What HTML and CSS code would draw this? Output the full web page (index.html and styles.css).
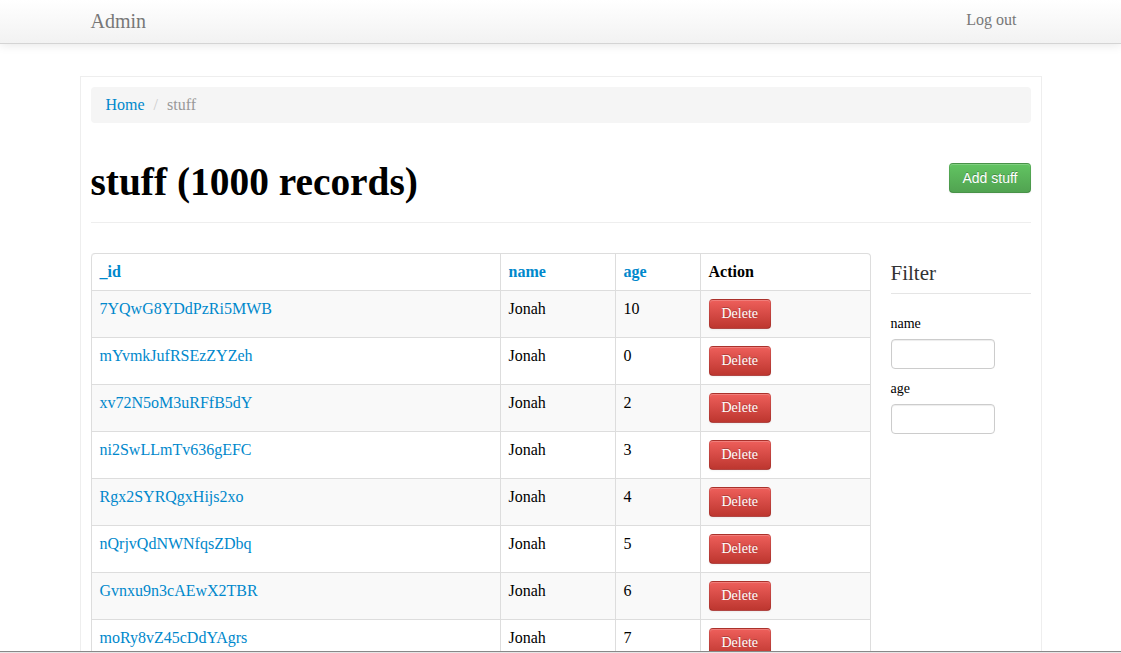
FILE: index.html
```html
<!DOCTYPE html>
<html>
<head>
<meta charset="utf-8">
<title>Admin</title>
<link rel="stylesheet" href="styles.css">
</head>
<body>
<header class="navbar">
  <div class="navbar-inner">
    <a class="brand" href="#">Admin</a>
    <a class="nav-link" href="#">Log out</a>
  </div>
</header>

<main class="card">
  <nav class="breadcrumb">
    <a href="#">Home</a> <span class="divider">/</span> <span class="active">stuff</span>
  </nav>

  <div class="page-header">
    <h1>stuff (1000 records)</h1>
    <a class="btn-add" href="#">Add stuff</a>
  </div>

  <div class="row">
    <div class="table-col">
      <table class="data-table">
        <colgroup>
          <col class="c-id"><col class="c-name"><col class="c-age"><col class="c-action">
        </colgroup>
        <thead>
          <tr><th><a href="#">_id</a></th><th><a href="#">name</a></th><th><a href="#">age</a></th><th>Action</th></tr>
        </thead>
        <tbody>
          <tr><td><a href="#">7YQwG8YDdPzRi5MWB</a></td><td>Jonah</td><td>10</td><td><button class="btn-delete">Delete</button></td></tr>
          <tr><td><a href="#">mYvmkJufRSEzZYZeh</a></td><td>Jonah</td><td>0</td><td><button class="btn-delete">Delete</button></td></tr>
          <tr><td><a href="#">xv72N5oM3uRFfB5dY</a></td><td>Jonah</td><td>2</td><td><button class="btn-delete">Delete</button></td></tr>
          <tr><td><a href="#">ni2SwLLmTv636gEFC</a></td><td>Jonah</td><td>3</td><td><button class="btn-delete">Delete</button></td></tr>
          <tr><td><a href="#">Rgx2SYRQgxHijs2xo</a></td><td>Jonah</td><td>4</td><td><button class="btn-delete">Delete</button></td></tr>
          <tr><td><a href="#">nQrjvQdNWNfqsZDbq</a></td><td>Jonah</td><td>5</td><td><button class="btn-delete">Delete</button></td></tr>
          <tr><td><a href="#">Gvnxu9n3cAEwX2TBR</a></td><td>Jonah</td><td>6</td><td><button class="btn-delete">Delete</button></td></tr>
          <tr><td><a href="#">moRy8vZ45cDdYAgrs</a></td><td>Jonah</td><td>7</td><td><button class="btn-delete">Delete</button></td></tr>
        </tbody>
      </table>
    </div>

    <aside class="filter">
      <div class="legend">Filter</div>
      <label class="field-label" for="f-name">name</label>
      <input class="field-input" id="f-name" type="text">
      <label class="field-label" for="f-age">age</label>
      <input class="field-input" id="f-age" type="text">
    </aside>
  </div>
</main>

<div class="window-edge"></div>
</body>
</html>
```

FILE: styles.css
```css
* { box-sizing: border-box; }

html, body {
  margin: 0;
  padding: 0;
  background: #fff;
}

body {
  font-family: "Liberation Serif", "Times New Roman", serif;
  font-size: 16px;
  line-height: 20px;
  color: #000;
  overflow: hidden;
}

a { color: #0088cc; text-decoration: none; }

.navbar {
  height: 44px;
  background: linear-gradient(to bottom, #ffffff, #f2f2f2);
  border-bottom: 1px solid #d4d4d4;
  box-shadow: 0 1px 10px rgba(0, 0, 0, 0.1);
}

.navbar-inner {
  width: 940px;
  margin: 0 auto;
  height: 43px;
  display: flex;
  justify-content: space-between;
  align-items: flex-start;
}

.brand {
  font-size: 20px;
  line-height: 20px;
  color: #777;
  padding-top: 11px;
}

.nav-link {
  font-size: 16px;
  color: #777;
  padding-top: 10px;
  margin-right: 14px;
}

.card {
  width: 962px;
  margin: 32px auto 0;
  padding: 10px;
  border: 1px solid #eee;
  border-bottom: 0;
  min-height: 700px;
}

.breadcrumb {
  background: #f5f5f5;
  border-radius: 4px;
  padding: 8px 15px;
  line-height: 20px;
  margin-bottom: 20px;
}

.breadcrumb .divider {
  color: #ccc;
  padding: 0 5px;
}

.breadcrumb .active { color: #999; }

.page-header {
  display: flex;
  justify-content: space-between;
  align-items: flex-start;
  padding: 19px 0 20px;
  border-bottom: 1px solid #eee;
}

.page-header h1 {
  margin: 0;
  font-size: 39.4px;
  line-height: 40px;
  font-weight: bold;
  color: #000;
}

.btn-add {
  margin-top: 1px;
  display: inline-block;
  font-family: "Liberation Sans", Arial, sans-serif;
  font-size: 14px;
  line-height: 20px;
  padding: 4px 12px;
  color: #fff;
  text-shadow: 0 -1px 0 rgba(0, 0, 0, 0.25);
  background: linear-gradient(to bottom, #62c462, #51a351);
  border: 1px solid;
  border-color: rgba(0, 0, 0, 0.1) rgba(0, 0, 0, 0.1) rgba(0, 0, 0, 0.25);
  border-radius: 4px;
  box-shadow: inset 0 1px 0 rgba(255, 255, 255, 0.2), 0 1px 2px rgba(0, 0, 0, 0.05);
}

.row {
  display: flex;
  gap: 20px;
  margin-top: 30px;
}

.table-col { width: 780px; }

.data-table {
  width: 780px;
  table-layout: fixed;
  border-collapse: separate;
  border-spacing: 0;
  border: 1px solid #ddd;
  border-left: 0;
  border-radius: 4px;
}

.c-id { width: 409px; }
.c-name { width: 115px; }
.c-age { width: 85px; }
.c-action { width: 170px; }

.data-table th,
.data-table td {
  padding: 8px;
  line-height: 20px;
  text-align: left;
  vertical-align: top;
  border-left: 1px solid #ddd;
  border-top: 1px solid #ddd;
  font-size: 16px;
}

.data-table thead th {
  border-top: 0;
  font-weight: bold;
  color: #000;
}

.data-table thead th:first-child { border-top-left-radius: 4px; }

.data-table tbody tr:nth-child(odd) td { background: #f9f9f9; }

.btn-delete {
  font-family: "Liberation Serif", "Times New Roman", serif;
  font-size: 14px;
  line-height: 20px;
  padding: 4px 12px;
  color: #fff;
  text-shadow: 0 -1px 0 rgba(0, 0, 0, 0.25);
  background: linear-gradient(to bottom, #ee5f5b, #bd362f);
  border: 1px solid;
  border-color: rgba(0, 0, 0, 0.1) rgba(0, 0, 0, 0.1) rgba(0, 0, 0, 0.25);
  border-radius: 4px;
  box-shadow: inset 0 1px 0 rgba(255, 255, 255, 0.2), 0 1px 2px rgba(0, 0, 0, 0.05);
  cursor: pointer;
  display: block;
}

.filter {
  width: 140px;
  display: flex;
  flex-direction: column;
  align-items: flex-start;
}

.legend {
  width: 100%;
  font-size: 21px;
  line-height: 40px;
  color: #333;
  border-bottom: 1px solid #e5e5e5;
  margin-bottom: 20px;
}

.field-label {
  font-size: 14px;
  line-height: 20px;
  margin-bottom: 5px;
}

.field-input {
  width: 104px;
  height: 30px;
  border: 1px solid #ccc;
  border-radius: 4px;
  box-shadow: inset 0 1px 1px rgba(0, 0, 0, 0.075);
  margin: 0 0 10px;
  padding: 4px 6px;
  font-size: 14px;
}

.window-edge {
  position: fixed;
  left: 0;
  right: 0;
  bottom: 0;
  height: 2px;
  border-top: 1px solid #888;
  background: #e6e6e6;
}
```
